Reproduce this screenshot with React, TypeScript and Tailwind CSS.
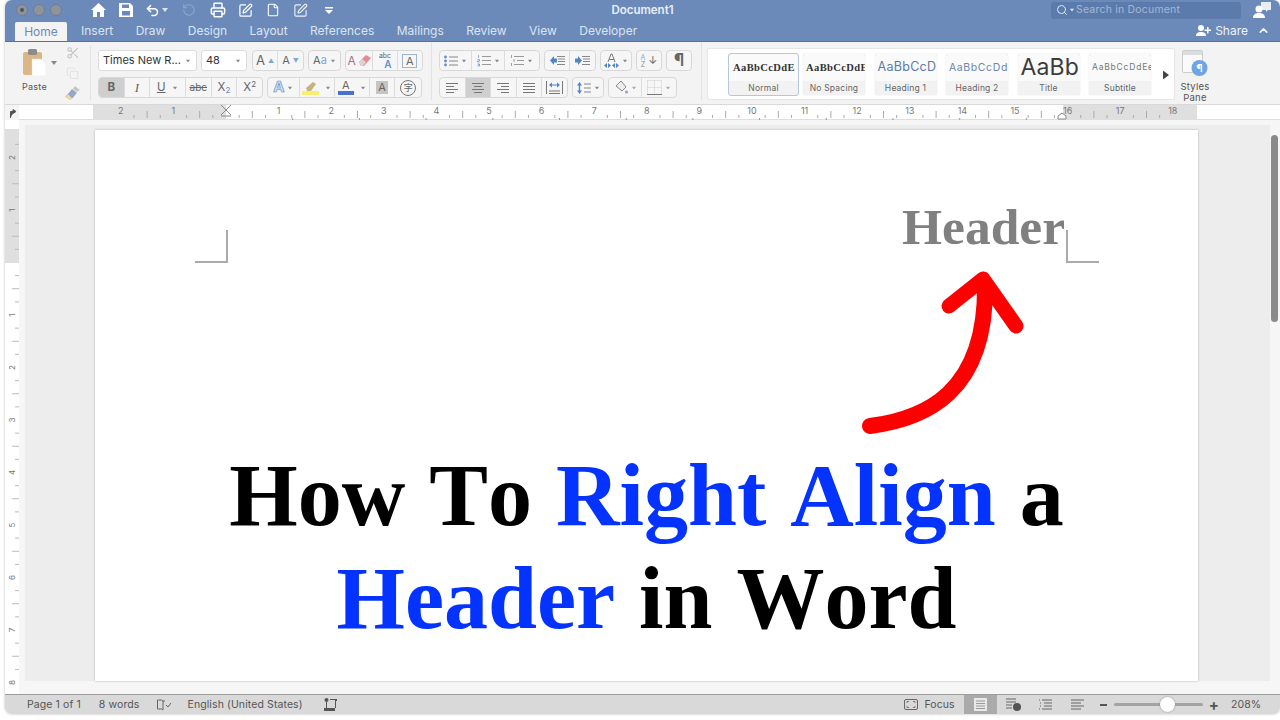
import { ChevronUp, Copy, File, Printer, RotateCw, Scissors, Search, SquarePen, Undo2 } from 'lucide-react'
import type { ReactNode } from 'react'

const uiFont = 'font-[Inter,"Liberation_Sans",sans-serif]'

function Caret({ className = '' }: { className?: string }) {
  return (
    <svg width="6" height="4" viewBox="0 0 6 4" className={className}>
      <path d="M0 0h6L3 4z" fill="currentColor" />
    </svg>
  )
}

function Cell({ w, children, active = false, last = false }: { w: string; children: ReactNode; active?: boolean; last?: boolean }) {
  return (
    <div
      className={`${w} h-full flex items-center justify-center gap-[3px] ${last ? '' : 'border-r border-[#dcdcdc]'} ${active ? 'bg-[#cfcfcf]' : ''}`}
    >
      {children}
    </div>
  )
}

function Group({ children, w }: { children: ReactNode; w: string }) {
  return <div className={`${w} h-[21px] flex rounded-[4px] border border-[#d8d8d8] bg-[#f6f6f6] overflow-hidden text-[#666]`}>{children}</div>
}

function Lines({ x = 0, w = 12, align = 'left' }: { x?: number; w?: number; align?: 'left' | 'center' | 'right' | 'full' }) {
  const short = align === 'full' ? w : w - 4
  const off = align === 'left' || align === 'full' ? 0 : align === 'center' ? 2 : 4
  return (
    <svg width={x + w} height="11" viewBox={`0 0 ${x + w} 11`} stroke="#777" strokeWidth="1">
      <path d={`M${x} 1.5h${w}M${x + off} 4.5h${short}M${x} 7.5h${w}M${x + off} 10.5h${short}`} />
    </svg>
  )
}

function Bullets() {
  return (
    <svg width="14" height="12" viewBox="0 0 14 12">
      <path d="M5 2h9M5 6h9M5 10h9" stroke="#888" />
      <circle cx="1.5" cy="2" r="1.4" fill="#5f8fd0" />
      <circle cx="1.5" cy="6" r="1.4" fill="#5f8fd0" />
      <circle cx="1.5" cy="10" r="1.4" fill="#5f8fd0" />
    </svg>
  )
}

function Numbered() {
  return (
    <svg width="14" height="13" viewBox="0 0 14 13">
      <path d="M5 2.500h9M5 6.500h9M5 10.500h9" stroke="#999" />
      <path d="M1.500 1v3M.5 5.500h2v1.500h-2v1h2M.5 10h2v1h-1 1v1h-2" stroke="#5f8fd0" strokeWidth=".7" fill="none" />
    </svg>
  )
}

function Multilevel() {
  return (
    <svg width="14" height="13" viewBox="0 0 14 13">
      <path d="M4 2.500h10M7 6.500h7M4 10.500h10" stroke="#999" />
      <path d="M1.500 1v3M4 5v3M1.500 9v3" stroke="#5f8fd0" strokeWidth=".8" />
    </svg>
  )
}

function Indent({ flip = false }: { flip?: boolean }) {
  return (
    <svg width="15" height="11" viewBox="0 0 15 11">
      <path d="M7 1.5h8M8 4h7M8 6.5h7M7 9.5h8" stroke="#888" />
      <path d={flip ? 'M0 3.5h3V1l4 4.500-4 4.500V7.500H0z' : 'M7 3.500H4V1L0 5.500 4 10V7.500h3z'} fill="#4f86c8" />
    </svg>
  )
}

function PasteIcon() {
  return (
    <svg width="23" height="27" viewBox="0 0 23 27">
      <rect x="0" y="3" width="19" height="23" rx="2" fill="#dcb684" />
      <rect x="5" y="0" width="9" height="6" rx="1.500" fill="#8c8c8c" />
      <path d="M9 10h9l5 5v11a1 1 0 0 1-1 1H9z" fill="#fff" stroke="#e0e0e0" strokeWidth=".5" />
    </svg>
  )
}

function Brush() {
  return (
    <svg width="15" height="14" viewBox="0 0 15 14">
      <path d="M10 0l5 4-3 2-4-3z" fill="#c4c4c4" />
      <path d="M7 3l5 4-4 5-3 2-5-3 3-3z" fill="#93a7cb" />
      <path d="M0 11l5 3 2-1.500-4-4z" fill="#efd6a6" />
    </svg>
  )
}

function Eraser() {
  return (
    <svg width="15" height="13" viewBox="0 0 15 13">
      <path d="M3 8l7-7 5 3-7 8H5z" fill="#e58a93" />
      <path d="M3 8l3-3 4 3-3 4H5z" fill="#d6d6d6" />
    </svg>
  )
}

function StyleCard({ label, children, selected = false, w = 'w-[62px]', font }: { label: string; children: ReactNode; selected?: boolean; w?: string; font: string }) {
  return (
    <div className={`${w} h-[41px] shrink-0 flex flex-col rounded-[2px] bg-[#fafafa] shadow-[0_0_1px_#bbb] overflow-hidden ${selected ? 'outline outline-[#b6c6dc] -mr-[4.500px]' : ''}`}>
      <div className={`h-[27px] flex items-center pl-[3px] overflow-hidden whitespace-nowrap ${font}`}>{children}</div>
      <div className="flex-1 bg-[#f2f2f2] text-[8.500px] tracking-[0.2px] text-[#666] text-center leading-[14px]">{label}</div>
    </div>
  )
}

function TitleBar() {
  const tabs = ['Insert', 'Draw', 'Design', 'Layout', 'References', 'Mailings', 'Review', 'View', 'Developer']
  return (
    <div className="h-[42px] shrink-0 bg-[#6b8aba] border-b border-[#55719c] flex flex-col text-[#e8eef7]">
      <div className="h-[20px] grid grid-cols-[1fr_auto_1fr] items-center">
        <div className="flex items-center pl-[11px]">
          <div className="w-[12px] h-[12px] rounded-full bg-[#8e949e] border border-[#767c87] flex items-center justify-center">
            <div className="w-[4px] h-[4px] rounded-full bg-[#4b5563]" />
          </div>
          <div className="w-[12px] h-[12px] ml-[5px] rounded-full bg-[#8e949e] border border-[#767c87]" />
          <div className="w-[12px] h-[12px] ml-[5px] rounded-full bg-[#8e949e] border border-[#767c87]" />
          <svg width="15" height="14" viewBox="0 0 15 14" className="ml-[29px]">
            <path d="M7.500 0L15 7h-2v7H9V9H6v5H2V7H0z" fill="#fff" />
          </svg>
          <svg width="14" height="14" viewBox="0 0 14 14" className="ml-[13px]">
            <path fillRule="evenodd" d="M0 0h11l3 3v11H0zM3 1.500v3.500h7V1.500zM3 8v4.500h8V8z" fill="#fff" />
          </svg>
          <Undo2 size={15} strokeWidth={2.400} className="ml-[12px] text-white" />
          <Caret className="ml-[2px] text-[#dbe4f2]" />
          <RotateCw size={14} strokeWidth={1.800} className="ml-[14px] text-[#8fa8cc] -scale-x-100" />
          <Printer size={16} strokeWidth={2.200} className="ml-[14px] text-white" />
          <SquarePen size={15} strokeWidth={2} className="ml-[12px] text-white" />
          <File size={14} strokeWidth={1.800} className="ml-[13px] text-white" />
          <SquarePen size={15} strokeWidth={1.800} className="ml-[13px] text-[#eef2f8]" />
          <svg width="8" height="7" viewBox="0 0 8 7" className="ml-[17px]">
            <path d="M0 0h8v1.500H0zM0 3h8L4 7z" fill="#fff" />
          </svg>
        </div>
        <div className="text-[11.500px] font-semibold pt-[1px]">Document1</div>
        <div className="flex items-center justify-end">
          <div className="w-[190px] h-[17px] rounded-[3px] bg-[#5c7bad] flex items-center pl-[5px] text-[#a4b7d4] text-[10.500px] tracking-[0.2px]">
            <Search size={12} className="text-[#dfe7f3]" />
            <Caret className="ml-[1px] mr-[1px] scale-75 text-[#dfe7f3]" />
            Search in Document
          </div>
          <svg width="18" height="17" viewBox="0 0 18 17" className="ml-[12px] mr-[9px]">
            <path d="M8 0h10v8h-3l-2 2v-2H8z" fill="#fff" opacity=".85" />
            <circle cx="6" cy="7" r="3.500" fill="#fff" />
            <path d="M0 16c0-4 3-5 6-5s6 1 6 5z" fill="#fff" />
          </svg>
        </div>
      </div>
      <div className="flex-1 flex items-end pl-[10px]">
        <div className="w-[52px] h-[19px] rounded-t-[2px] bg-[#f3f3f3] text-[#6b8aba] text-[12px] leading-[20px] text-center">Home</div>
        <div className="flex gap-[22.400px] ml-[14px] h-[21px] text-[12px] leading-[21px] text-[#dbe4f1]">
          {tabs.map((tab) => (
            <span key={tab}>{tab}</span>
          ))}
        </div>
        <div className="ml-auto flex items-center h-[21px] pr-[10px] text-[12px] text-[#eef2f8]">
          <svg width="15" height="11" viewBox="0 0 15 11">
            <circle cx="5" cy="3" r="3" fill="#fff" />
            <path d="M0 11c0-3 2-4 5-4s5 1 5 4zM11 2h1.500v2.500H15V6h-2.500v2.500H11V6H8.500V4.500H11z" fill="#fff" />
          </svg>
          <span className="ml-[4px]">Share</span>
          <ChevronUp size={13} strokeWidth={3} className="ml-[9px]" />
        </div>
      </div>
    </div>
  )
}

function Ribbon() {
  return (
    <div className="h-[63px] shrink-0 bg-[#f3f3f3] flex items-stretch border-b border-[#d9d9d9] text-[#555]">
      {/* Clipboard */}
      <div className="w-[86px] flex border-r border-[#e2e2e2] my-[4px]">
        <div className="w-[59px] flex flex-col items-center pt-[3px] pl-[8px]">
          <div className="flex items-center gap-[5px] pl-[3px]">
            <PasteIcon />
            <Caret className="text-[#888]" />
          </div>
          <span className="text-[9px] mt-[4px] mr-[8px] tracking-[0.3px]">Paste</span>
        </div>
        <div className="flex flex-col items-center gap-[7px] pl-[1px]">
          <Scissors size={14} className="text-[#c4c4c4]" />
          <Copy size={13} className="text-[#e2e2e2]" />
          <Brush />
        </div>
      </div>

      {/* Font */}
      <div className="w-[341px] pl-[7px] pt-[8px] flex flex-col gap-[6px] border-r border-[#e2e2e2] mb-[4px]">
        <div className="flex gap-[4px] h-[21px]">
          <div className="w-[99px] h-[21px] bg-white border border-[#dcdcdc] rounded-[3px] flex items-center pl-[4px] pr-[5px] text-[11px] text-[#333]">
            <span className="flex-1">Times New R...</span>
            <Caret className="text-[#888] scale-75" />
          </div>
          <div className="w-[46px] h-[21px] bg-white border border-[#dcdcdc] rounded-[3px] flex items-center pl-[4px] pr-[5px] text-[11px] text-[#333]">
            <span className="flex-1">48</span>
            <Caret className="text-[#888] scale-75" />
          </div>
          <div className="w-[52px] ml-[1px]">
            <Group w="w-[52px]">
              <Cell w="w-[26px]">
                <span className="text-[13px] leading-none">A</span>
                <span className="text-[6px] text-[#7da7d9]">▲</span>
              </Cell>
              <Cell w="w-[26px]" last>
                <span className="text-[11px] leading-none">A</span>
                <span className="text-[6px] text-[#7da7d9]">▼</span>
              </Cell>
            </Group>
          </div>
          <Group w="w-[33px]">
            <Cell w="w-full" last>
              <span className="text-[11px]">A<span className="text-[#7da7d9]">a</span></span>
              <Caret className="text-[#888] scale-75" />
            </Cell>
          </Group>
          <Group w="w-[78px]">
            <Cell w="w-[28px]">
              <div className="flex items-center">
                <span className="text-[12px] leading-none text-[#a8728a]">A</span>
                <Eraser />
              </div>
            </Cell>
            <Cell w="w-[25px]">
              <div className="flex flex-col items-center">
                <span className="text-[7px] leading-[7px]">abc</span>
                <span className="text-[10px] leading-[10px] text-[#5f8fd0] font-semibold pl-[6px]">A</span>
              </div>
            </Cell>
            <Cell w="w-[25px]" last>
              <span className="w-[15px] h-[14px] border border-[#9db4d2] text-[11px] leading-[12px] text-center">A</span>
            </Cell>
          </Group>
        </div>
        <div className="flex gap-[4px] h-[21px]">
          <Group w="w-[165px]">
            <Cell w="w-[26px]" active><span className="text-[11.500px] font-bold">B</span></Cell>
            <Cell w="w-[26px]"><span className="font-[Liberation_Serif,serif] italic text-[13px]">I</span></Cell>
            <div className="w-[36px] flex items-center justify-center gap-[7px] border-r border-[#dcdcdc]">
              <span className="text-[11.500px] underline">U</span>
              <Caret className="text-[#888] scale-75" />
            </div>
            <Cell w="w-[26px]"><span className="text-[10px] line-through">abc</span></Cell>
            <Cell w="w-[26px]"><span className="text-[11.500px]">X<sub className="text-[8px] text-[#6b8aba]">2</sub></span></Cell>
            <Cell w="w-[25px]" last><span className="text-[11.500px]">X<sup className="text-[8px]">2</sup></span></Cell>
          </Group>
          <Group w="w-[155px]">
            <Cell w="w-[32px]">
              <span className="text-[15px] font-bold text-[#cfe0f4] [-webkit-text-stroke:0.7px_#5f8fd0]">A</span>
              <Caret className="text-[#888] scale-75" />
            </Cell>
            <Cell w="w-[36px]">
              <svg width="17" height="15" viewBox="0 0 17 15">
                <path d="M4 8l7-6 3 2-5 7H5z" fill="#c9b27c" />
                <rect x="0" y="11" width="17" height="4" fill="#f8ee70" />
              </svg>
              <Caret className="text-[#888] scale-75 ml-[3px]" />
            </Cell>
            <Cell w="w-[35px]">
              <div className="flex flex-col items-center leading-none">
                <span className="text-[11px] leading-[10px]">A</span>
                <span className="w-[16px] h-[4px] mt-[1px] bg-[#4a6fd1]" />
              </div>
              <Caret className="text-[#888] scale-75 ml-[3px]" />
            </Cell>
            <Cell w="w-[26px]">
              <span className="w-[12px] h-[13px] bg-[#c4c4c4] text-[11px] leading-[13px] text-center">A</span>
            </Cell>
            <Cell w="w-[26px]" last>
              <span className="w-[16px] h-[16px] rounded-full border border-[#777] text-[9px] leading-[14px] text-center font-['Noto_Sans_CJK_SC',sans-serif]">字</span>
            </Cell>
          </Group>
        </div>
      </div>

      {/* Paragraph */}
      <div className="w-[270px] pl-[7px] pt-[8px] flex flex-col gap-[6px] border-r border-[#e2e2e2] mb-[4px]">
        <div className="flex gap-[4px] h-[21px]">
          <Group w="w-[101px]">
            <Cell w="w-[33px]"><Bullets /><Caret className="text-[#888] scale-75" /></Cell>
            <Cell w="w-[33px]"><Numbered /><Caret className="text-[#888] scale-75" /></Cell>
            <Cell w="w-[35px]" last><Multilevel /><Caret className="text-[#888] scale-75" /></Cell>
          </Group>
          <Group w="w-[52px]">
            <Cell w="w-[26px]"><Indent /></Cell>
            <Cell w="w-[26px]" last><Indent flip /></Cell>
          </Group>
          <Group w="w-[32px]">
            <Cell w="w-full" last>
              <svg width="15" height="15" viewBox="0 0 15 15">
                <path d="M4 9l3-8h1l3 8M5 6.500h5" stroke="#777" fill="none" />
                <path d="M0 12.500l3-2.500v5zM7 12.500l-3-2.500v5zM15 12.500l-3-2.500v5zM8 12.500l3-2.500v5z" fill="#4f86c8" />
              </svg>
              <Caret className="text-[#888] scale-75" />
            </Cell>
          </Group>
          <Group w="w-[26px]">
            <Cell w="w-full" last>
              <div className="flex flex-col items-center">
                <span className="text-[7px] leading-[7px] text-[#7da7d9]">A</span>
                <span className="text-[7px] leading-[7px] text-[#888]">Z</span>
              </div>
              <span className="text-[11px]">↓</span>
            </Cell>
          </Group>
          <Group w="w-[26px]">
            <Cell w="w-full" last><span className="text-[17px] leading-none font-bold">¶</span></Cell>
          </Group>
        </div>
        <div className="flex gap-[4px] h-[21px]">
          <Group w="w-[129px]">
            <Cell w="w-[26px]"><Lines align="left" /></Cell>
            <Cell w="w-[26px]" active><Lines align="center" /></Cell>
            <Cell w="w-[26px]"><Lines align="right" /></Cell>
            <Cell w="w-[26px]"><Lines align="full" /></Cell>
            <Cell w="w-[25px]" last>
              <svg width="17" height="13" viewBox="0 0 17 13">
                <path d="M.5 0v13M16.500 0v13M3 10h11M3 12.500h11" stroke="#777" />
                <path d="M3 4l3-2.500v5zM14 4l-3-2.500v5zM6 3.500h5v1H6z" fill="#4f86c8" />
              </svg>
            </Cell>
          </Group>
          <Group w="w-[32px]">
            <Cell w="w-full" last>
              <svg width="14" height="12" viewBox="0 0 14 12">
                <path d="M2.500 0L5 3.500H0zM2.500 12L0 8.500h5zM1.800 3h1.400v6H1.800z" fill="#4f86c8" />
                <path d="M7 2h7M7 6h7M7 10h7" stroke="#888" />
              </svg>
              <Caret className="text-[#888] scale-75" />
            </Cell>
          </Group>
          <Group w="w-[69px]">
            <Cell w="w-[34px]">
              <svg width="14" height="15" viewBox="0 0 14 15">
                <path d="M2 6l5-5 5 6-4 4z" fill="#eee" stroke="#888" />
                <circle cx="12.500" cy="12" r="1.500" fill="#8ea6c8" />
              </svg>
              <Caret className="text-[#aaa] scale-75" />
            </Cell>
            <Cell w="w-[35px]" last>
              <svg width="15" height="15" viewBox="0 0 15 15">
                <path d="M.5.5h14v14M.5.500v14M7.500.5v14M.5 7.500h14" stroke="#ccc" strokeDasharray="1 1" fill="none" />
                <path d="M0 14.500h15" stroke="#777" />
              </svg>
              <Caret className="text-[#aaa] scale-75" />
            </Cell>
          </Group>
        </div>
      </div>

      {/* Styles */}
      <div className="flex-1 flex pl-[5px]">
        <div className="w-[468px] h-[52px] mt-[6px] bg-white border border-[#e6e6e6] rounded-[2px] flex items-center pl-[21px] pt-[1px] gap-[9.500px]">
          <StyleCard label="Normal" w="w-[69px]" selected font="font-['Liberation_Serif',serif] font-bold text-[#333] text-[10.500px] tracking-[0.4px] pl-[4px]">
            AaBbCcDdE
          </StyleCard>
          <StyleCard label="No Spacing" font="font-['Liberation_Serif',serif] font-bold text-[#333] text-[10.500px] tracking-[0.4px]">
            AaBbCcDdE
          </StyleCard>
          <StyleCard label="Heading 1" font="text-[#5b7aa6] text-[12.500px] tracking-[0.3px]">
            AaBbCcD
          </StyleCard>
          <StyleCard label="Heading 2" font="text-[#6b86ad] text-[10.500px] tracking-[0.6px]">
            AaBbCcDdI
          </StyleCard>
          <StyleCard label="Title" font="text-[#3c3c3c] text-[23px] tracking-[0.1px]">
            AaBb
          </StyleCard>
          <StyleCard label="Subtitle" font="text-[#777] text-[8.500px] tracking-[0.8px]">
            AaBbCcDdEe
          </StyleCard>
          <Caret className="ml-[2.500px] -rotate-90 scale-150 text-[#444]" />
        </div>
        <div className="w-[34px] ml-[3px] pt-[8px] flex flex-col items-center">
          <svg width="27" height="26" viewBox="0 0 27 26">
            <rect x=".5" y=".5" width="20" height="22" rx="1.500" fill="#fafafa" stroke="#ccc" />
            <rect x="1" y="1" width="19" height="4" fill="#ddd" />
            <circle cx="17.500" cy="18" r="8" fill="#6fa5e0" />
            <text x="17.500" y="21.500" fontSize="10" fontWeight="700" fill="#fff" textAnchor="middle">¶</text>
          </svg>
          <span className="text-[9.500px] leading-[11px] text-center mt-[5px] tracking-[0.2px]">Styles Pane</span>
        </div>
      </div>
    </div>
  )
}

function HorizontalRuler() {
  const unit = 52.6
  const zero = 207
  const ticks: number[] = []
  for (let q = -8; q <= 72; q++) ticks.push(q)
  const tabStops = [1, 2, 3, 4, 5, 6, 7, 8, 9, 10, 11, 12]
  return (
    <div className="h-[15px] shrink-0 flex bg-white border-b border-[#dedede]">
      <svg width="14" height="15" viewBox="0 0 14 15" className="shrink-0 bg-[#f4f4f4]">
        <path d="M5.500 13V6.500H9M8 4.500l3 2-3 2z" fill="#555" stroke="#555" />
      </svg>
      <svg width="1261" height="15" viewBox="0 0 1261 15" className="font-[Inter,sans-serif]">
        <rect x="74" y="0" width="133" height="14" fill="#dfdfdf" />
        <rect x="1044" y="0" width="134" height="14" fill="#dfdfdf" />
        {ticks.map((q) => {
          const x = zero + (q * unit) / 4
          if (q === 0 || x < 76 || x > 1176 || q % 4 === 0) return null
          return <line key={q} x1={x} x2={x} y1={q % 2 === 0 ? 6 : 10} y2={13} stroke="#aaa" />
        })}
        {tabStops.map((t) => (
          <line key={t} x1={zero + t * 66.7} x2={zero + t * 66.7} y1={13} y2={15} stroke="#999" />
        ))}
        {[-2, -1, 1, 2, 3, 4, 5, 6, 7, 8, 9, 10, 11, 12, 13, 14, 15, 16, 17, 18].map((n) => (
          <text key={n} x={zero + n * unit} y={9} fontSize="9" fill="#777" textAnchor="middle">
            {Math.abs(n)}
          </text>
        ))}
        <path d="M202 0l5 5 5-5M202 11h10M207 5l-5 5M207 5l5 5" stroke="#888" fill="none" />
        <path d="M1039 14v-3l4-3 4 3v3z" fill="#fff" stroke="#888" />
      </svg>
    </div>
  )
}

function VerticalRuler() {
  const unit = 52.5
  const zero = 142.5
  const ticks: number[] = []
  for (let q = -9; q <= 34; q++) ticks.push(q)
  return (
    <svg width="14" height="574" viewBox="0 0 14 574" className="shrink-0 bg-white font-[Inter,sans-serif]">
      <rect x="0" y="9" width="14" height="134" fill="#dfdfdf" />
      {ticks.map((q) => {
        const y = zero + (q * unit) / 4
        if (y < 10 || q === 0 || q % 4 === 0) return null
        return <line key={q} x1={q % 2 === 0 ? 7 : 10} x2="14" y1={y} y2={y} stroke="#bbb" />
      })}
      {[-2, -1, 1, 2, 3, 4, 5, 6, 7, 8].map((n) => {
        const y = zero + n * unit
        return (
          <text key={n} x={7} y={y + 3} transform={`rotate(-90 7 ${y})`} fontSize="8" fill="#777" textAnchor="middle">
            {Math.abs(n)}
          </text>
        )
      })}
    </svg>
  )
}

function Page() {
  return (
    <div className="relative w-[1103px] h-[551px] ml-[70px] bg-white shadow-[0_0_2px_#aaa] font-['Liberation_Serif',serif] font-bold">
      <div className="h-[120px] pr-[133px] pt-[67px] text-right text-[#808080] text-[51.500px] leading-[60px]">Header</div>
      {/* crop marks */}
      <div className="absolute left-[100px] top-[100px] w-[33px] h-[33px] border-r-2 border-b-2 border-[#aaa]" />
      <div className="absolute left-[971px] top-[100px] w-[33px] h-[33px] border-l-2 border-b-2 border-[#aaa]" />
      <svg className="absolute left-[760px] top-[135px]" width="170" height="175" viewBox="0 0 170 175" fill="none">
        <path d="M15 161 C70 154 131 128 130 21" stroke="#f00" strokeWidth="16" strokeLinecap="round" />
        <path d="M94 41 L128 14 L161 61" stroke="#f00" strokeWidth="15" strokeLinecap="round" strokeLinejoin="round" />
      </svg>
      <div className="pt-[194px] text-center text-[88px] leading-[103px] [font-kerning:none] [word-spacing:2px] text-black">
        <div>
          How To <span className="text-[#0433ff]">Right Align</span> a
        </div>
        <div>
          <span className="text-[#0433ff]">Header</span> in Word
        </div>
      </div>
    </div>
  )
}

function StatusBar() {
  return (
    <div className="h-[20px] shrink-0 bg-[#d9d9d9] border-t border-[#9c9c9c] flex items-center text-[10.500px] text-[#555] tracking-[0.1px]">
      <span className="ml-[22px]">Page 1 of 1</span>
      <span className="ml-[18px]">8 words</span>
      <svg width="14" height="12" viewBox="0 0 14 12" className="ml-[18px]" fill="none" stroke="#666">
        <path d="M.5 1h4l1.500 1v9L4.500 10h-4zM6 2h2M9 6l2 2 3-4" />
      </svg>
      <span className="ml-[16px]">English (United States)</span>
      <svg width="14" height="13" viewBox="0 0 14 13" className="ml-[21px]" fill="#555">
        <circle cx="2.500" cy="2" r="2" />
        <path d="M2 4h1v6H2zM0 10h11v3H0zM6 1h7v2h-1v7h-1V2H6z" />
      </svg>
      <div className="ml-auto flex items-center h-full">
        <svg width="14" height="11" viewBox="0 0 14 11" fill="none" stroke="#666">
          <rect x=".5" y=".5" width="13" height="10" rx="1.500" />
          <path d="M3 4V2.500h2M9 2.500h2V4M11 7v1.500H9M5 8.500H3V7" strokeWidth=".8" />
        </svg>
        <span className="ml-[6px]">Focus</span>
        <div className="w-[33px] h-full ml-[9px] bg-[#aaaaaa] flex items-center justify-center">
          <svg width="13" height="13" viewBox="0 0 13 13">
            <rect width="13" height="13" fill="#e9e9e9" />
            <path d="M2 3h9M2 5.500h9M2 8h9M2 10.500h9" stroke="#999" />
          </svg>
        </div>
        <svg width="15" height="13" viewBox="0 0 15 13" className="ml-[9px]">
          <path d="M0 1h10M0 4h10M0 7h6M0 10h6" stroke="#666" />
          <circle cx="11" cy="9" r="4" fill="#555" />
        </svg>
        <svg width="13" height="11" viewBox="0 0 13 11" className="ml-[18px]">
          <path d="M3 1h10M5 4h8M5 7h8M3 10h10M0 1h1M1 4h1M1 7h1M0 10h1" stroke="#666" />
        </svg>
        <svg width="13" height="11" viewBox="0 0 13 11" className="ml-[19px]">
          <path d="M0 1h13M0 4h10M0 7h13M0 10h10" stroke="#666" />
        </svg>
        <span className="w-[7px] h-[2px] bg-[#555] ml-[16px]" />
        <div className="w-[89px] h-[3px] ml-[7px] rounded bg-[#a3a3a3] relative">
          <div className="absolute left-[46px] top-[-6.500px] w-[15px] h-[15px] rounded-full bg-white shadow-[0_0_2px_#888]" />
        </div>
        <span className="ml-[6px] text-[15px] leading-none font-bold">+</span>
        <span className="ml-[12px] mr-[20px] w-[29px]">208%</span>
      </div>
    </div>
  )
}

export default function App() {
  return (
    <div className={`w-[1280px] h-[720px] overflow-hidden bg-white pl-[5px] pb-[6px] ${uiFont}`}>
      <div className="h-full flex flex-col rounded-[7px] overflow-hidden shadow-[0_0_3px_#bbb]">
        <TitleBar />
        <Ribbon />
        <HorizontalRuler />
        <div className="flex-1 flex min-h-0">
          <VerticalRuler />
          <div className="relative flex-1 bg-[#ededed] border-l-[6px] border-t-[5px] border-r-[10px] border-b-[13px] border-[#f6f6f6] pt-[5px]">
            <Page />
            <div className="absolute -right-[8px] top-[10px] w-[7px] h-[187px] rounded-full bg-[#8a8a8a]" />
          </div>
        </div>
        <StatusBar />
      </div>
    </div>
  )
}
